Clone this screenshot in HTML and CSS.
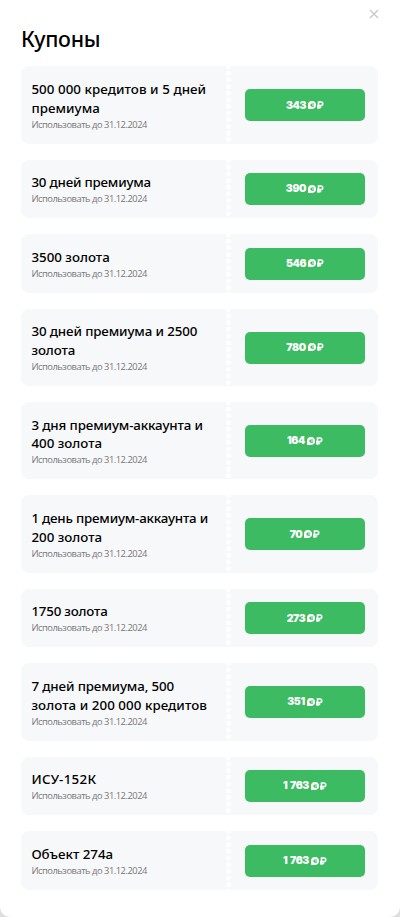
FILE: index.html
```html
<!DOCTYPE html>
<html lang="ru">
<head>
<meta charset="utf-8">
<title>Купоны</title>
<link rel="stylesheet" href="styles.css">
</head>
<body>
<svg class="defs" width="0" height="0">
  <symbol id="coin" viewBox="0 0 16 8">
    <path d="M0 8V4A4 4 0 1 1 4.2 8ZM5.9 2.4H3.6L2 4L3.6 5.7H5.8L6.3 4.5H4V3.6H6.3Z" fill="#fff" fill-rule="evenodd"/>
    <path d="M10.5 8V1H13A1.7 1.7 0 0 1 13 4.5H9M9 6.4H13.2" fill="none" stroke="#fff" stroke-width="1.6"/>
  </symbol>
</svg>
<main class="dialog">
  <button class="close" aria-label="Закрыть"><svg width="10" height="10" viewBox="0 0 10 10"><path d="M1 1L9 9M9 1L1 9" stroke="#c8c8c8" stroke-width="1.4"/></svg></button>
  <h1>Купоны</h1>
  <div class="list">
    <article class="card"><div class="info"><h2 class="loose">500 000 кредитов и 5 дней<br>премиума</h2><p>Использовать до 31.12.2024</p></div><div class="action"><button class="buy">343<svg><use href="#coin"/></svg></button></div></article>
    <article class="card"><div class="info"><h2 class="tight">30 дней премиума</h2><p>Использовать до 31.12.2024</p></div><div class="action"><button class="buy">390<svg><use href="#coin"/></svg></button></div></article>
    <article class="card"><div class="info"><h2>3500 золота</h2><p>Использовать до 31.12.2024</p></div><div class="action"><button class="buy">546<svg class="raised"><use href="#coin"/></svg></button></div></article>
    <article class="card"><div class="info"><h2 class="snug">30 дней премиума и 2500<br>золота</h2><p>Использовать до 31.12.2024</p></div><div class="action"><button class="buy">780<svg class="raised"><use href="#coin"/></svg></button></div></article>
    <article class="card"><div class="info"><h2><span class="snug">3 дня премиум-аккаунта и</span><br>400 золота</h2><p>Использовать до 31.12.2024</p></div><div class="action"><button class="buy">164<svg><use href="#coin"/></svg></button></div></article>
    <article class="card"><div class="info"><h2><span class="tight">1 день премиум-аккаунта и</span><br>200 золота</h2><p>Использовать до 31.12.2024</p></div><div class="action"><button class="buy">70<svg><use href="#coin"/></svg></button></div></article>
    <article class="card"><div class="info"><h2 class="tight">1750 золота</h2><p>Использовать до 31.12.2024</p></div><div class="action"><button class="buy">273<svg><use href="#coin"/></svg></button></div></article>
    <article class="card"><div class="info"><h2><span class="snug">7 дней премиума, 500</span><br><span class="loose">золота и 200 000 кредитов</span></h2><p>Использовать до 31.12.2024</p></div><div class="action"><button class="buy">351<svg><use href="#coin"/></svg></button></div></article>
    <article class="card"><div class="info"><h2 class="wide">ИСУ-152К</h2><p>Использовать до 31.12.2024</p></div><div class="action"><button class="buy">1 763<svg><use href="#coin"/></svg></button></div></article>
    <article class="card"><div class="info"><h2>Объект 274а</h2><p>Использовать до 31.12.2024</p></div><div class="action"><button class="buy">1 763<svg><use href="#coin"/></svg></button></div></article>
  </div>
</main>
</body>
</html>
```
FILE: styles.css
```css
* { box-sizing: border-box; margin: 0; padding: 0; }
body { background: #dedede; overflow: hidden; }
.defs { position: absolute; }
.dialog {
  position: relative;
  height: 917px;
  padding: 24px 22px 0 21px;
  background: #fff;
  border-radius: 0 0 10px 10px;
  font-family: "Noto Sans", sans-serif;
  color: #000;
}
.close { position: absolute; top: 9px; right: 21px; width: 10px; height: 10px; border: 0; background: none; }
.close svg { display: block; }
h1 { height: 42.4px; font-size: 21.33px; font-weight: 500; line-height: 30px; letter-spacing: -0.3px; }
.list { display: flex; flex-direction: column; gap: 16px; }
.card {
  display: flex;
  align-items: center;
  padding: 13.45px 0;
  border-radius: 8px;
  background: #f7f8fa;
}
.info { width: 205px; padding: 0.5px 0 0 10.4px; margin-bottom: -0.5px; }
h2 { margin-top: -0.4px; padding-bottom: 0.4px; font-size: 13.33px; font-weight: 500; line-height: 18.67px; white-space: nowrap; }
.snug { letter-spacing: -0.12px; }
.tight { letter-spacing: -0.2px; }
.loose { letter-spacing: 0.06px; }
.wide { letter-spacing: 0.3px; }
.info p { font-family: "Open Sans", sans-serif; font-size: 9.33px; line-height: 13.07px; letter-spacing: -0.47px; color: #777; white-space: nowrap; }
.action {
  flex: 1;
  align-self: stretch;
  display: flex;
  align-items: center;
  padding-left: 19px;
  margin: -13.45px 0;
  background: radial-gradient(circle at 2.6px 3.33px, #fff 2.2px, transparent 2.8px) 0 -2.9px / 5.3px 6.67px repeat-y;
}
.buy {
  width: 120px;
  height: 32px;
  display: flex;
  align-items: center;
  justify-content: center;
  gap: 2px;
  border: 0;
  border-radius: 5px;
  background: #3cbb62;
  color: #fff;
  font: 900 10.4px/15px Inter, sans-serif;
  letter-spacing: -0.35px;
  word-spacing: 0.8px;
}
.buy svg { width: 16px; height: 8px; }
.buy .raised { margin-bottom: 2px; }
```
